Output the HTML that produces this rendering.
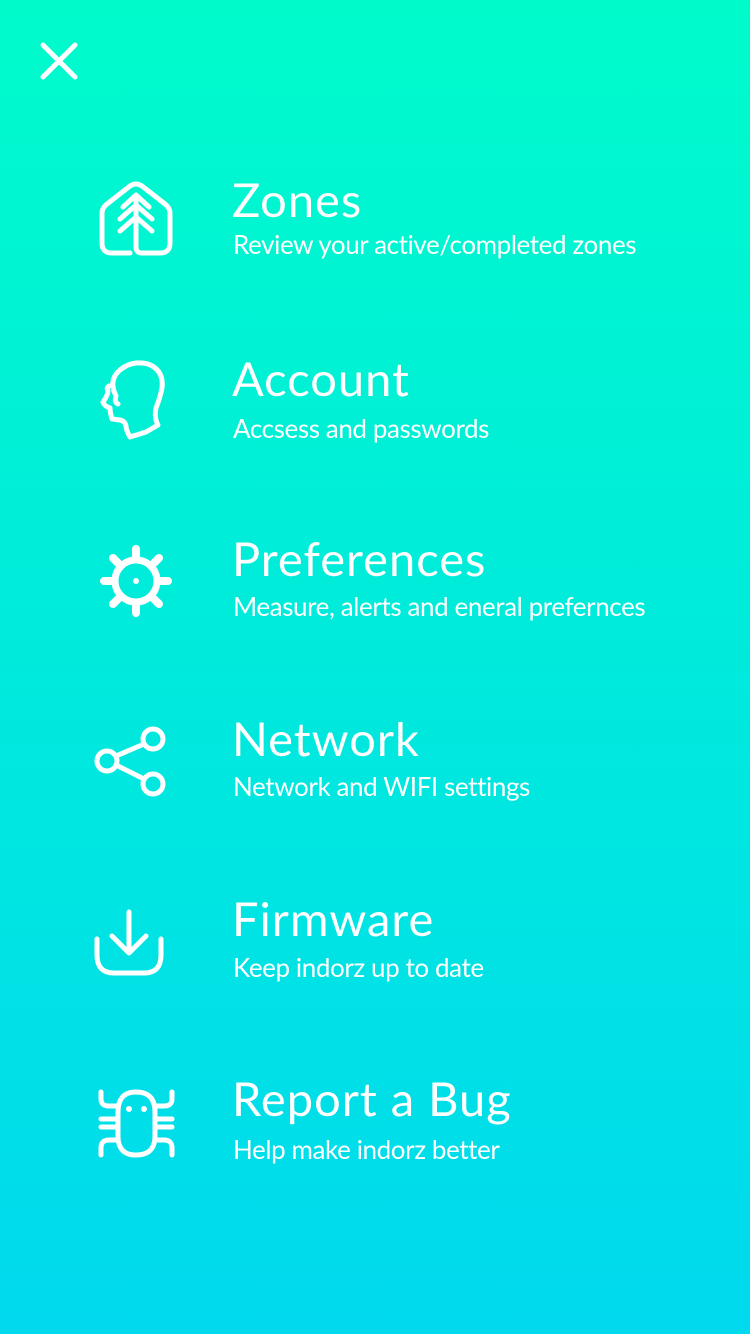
<!DOCTYPE html>
<html><head><style>
body{margin:0;width:750px;height:1334px;background:linear-gradient(#00fbcb,#00d9ee);font-family:"Lato","Liberation Sans",sans-serif;color:#fff;position:relative;overflow:hidden}
.t{position:absolute;left:232px;font-size:47px;letter-spacing:1px;line-height:1}
.s{position:absolute;left:233px;font-size:26px;line-height:1;letter-spacing:-0.4px}
svg{position:absolute;overflow:visible}
svg *{stroke:#fff;stroke-width:5;fill:none;stroke-linecap:round;stroke-linejoin:round}
</style></head><body>
<svg style="left:40px;top:42px" width="38" height="38"><path d="M3 3L35 35M35 3L3 35"/></svg>

<svg style="left:100px;top:183px" width="72" height="72"><path d="M30 70H12Q2 70 2 60V30Q2 25 7 21L30 3Q36 -1 42 3L65 21Q70 25 70 30V60Q70 70 60 70H42Q36 70 36 64V12M23 24L36 12L49 24M20 36L36 22L52 36M20 48L36 34L52 48"/></svg>
<div class="t" style="top:177px">Zones</div>
<div class="s" style="top:231px">Review your active/completed zones</div>

<svg style="left:100px;top:360px" width="65" height="82"><path d="M18 44Q14 42 16 36Q8 20 20 10Q32 0 48 4Q64 10 62 28Q60 38 56 48Q54 58 58 65L46 72L30 77Q26 70 26 66Q25 61 20 60L12 59Q10 52 10 48Q4 46 3 42Q8 35 8 31Q6 28 9 26"/></svg>
<div class="t" style="top:356px">Account</div>
<div class="s" style="top:415px">Accsess and passwords</div>

<svg style="left:100px;top:545px" width="72" height="72"><circle cx="36" cy="36" r="21" style="stroke-width:7"/><circle cx="36" cy="36" r="3" style="fill:#fff;stroke:none"/><path d="M36 4V12M36 60V68M4 36H12M60 36H68M13 13L18 18M54 54L59 59M59 13L54 18M18 54L13 59" style="stroke-width:8"/></svg>
<div class="t" style="top:536px">Preferences</div>
<div class="s" style="top:593px">Measure, alerts and eneral prefernces</div>

<svg style="left:95px;top:727px" width="72" height="72"><circle cx="12" cy="34" r="10"/><circle cx="58" cy="12" r="10"/><circle cx="58" cy="57" r="10"/><path d="M21 29L49 17M21 38L49 52"/></svg>
<div class="t" style="top:716px">Network</div>
<div class="s" style="top:773px">Network and WIFI settings</div>

<svg style="left:94px;top:910px" width="72" height="66"><path d="M35 2V43M18 26L35 43L52 26M3 29V45Q3 63 20 63H50Q67 63 67 45V29"/></svg>
<div class="t" style="top:896px">Firmware</div>
<div class="s" style="top:954px">Keep indorz up to date</div>

<svg style="left:99px;top:1090px" width="76" height="70"><path d="M19 46V22Q19 2 37 2Q56 2 56 22V46Q56 65 37 65Q19 65 19 46ZM2 2V9Q2 16 10 16H19M73 2V9Q73 16 65 16H56M2 29H19M2 37H19M56 29H73M56 37H73M2 65V58Q2 50 10 50H19M73 65V58Q73 50 65 50H56"/><circle cx="30" cy="19" r="3" style="fill:#fff;stroke:none"/><circle cx="45" cy="19" r="3" style="fill:#fff;stroke:none"/></svg>
<div class="t" style="top:1076px">Report a Bug</div>
<div class="s" style="top:1136px">Help make indorz better</div>
</body></html>
